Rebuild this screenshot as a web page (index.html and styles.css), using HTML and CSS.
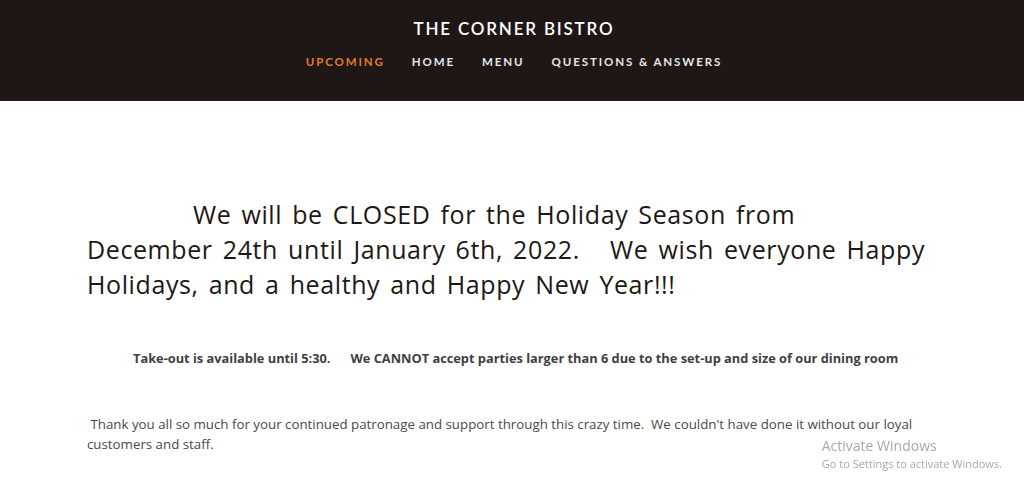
FILE: index.html
```html
<!DOCTYPE html>
<html>
<head>
<meta charset="utf-8">
<link rel="stylesheet" href="styles.css">
</head>
<body>
<header class="site-header">
  <div class="brand">THE CORNER BISTRO</div>
  <nav class="nav">
    <a class="nav-item active">UPCOMING</a>
    <a class="nav-item">HOME</a>
    <a class="nav-item">MENU</a>
    <a class="nav-item">QUESTIONS &amp; ANSWERS</a>
  </nav>
</header>
<main class="content">
  <h1 class="notice"><span class="indent">We will be CLOSED for the Holiday Season from</span><br>December 24th until January 6th, 2022.&nbsp;&nbsp; We wish everyone Happy Holidays, and a healthy and Happy New Year!!!</h1>
  <p class="takeout">Take-out is available until 5:30.&nbsp;&nbsp;&nbsp;&nbsp;&nbsp; We CANNOT accept parties larger than 6 due to the set-up and size of our dining room</p>
  <p class="thanks">&nbsp;Thank you all so much for your continued patronage and support through this crazy time.&nbsp; We couldn't have done it without our loyal customers and staff.</p>
</main>
<div class="watermark">
  <div class="wm-title">Activate Windows</div>
  <div class="wm-sub">Go to Settings to activate Windows.</div>
</div>
</body>
</html>
```
FILE: styles.css
```css
html, body { margin: 0; padding: 0; background: #fff; }
body { font-family: "Open Sans", Lato, sans-serif; color: #2a2320; }
.site-header {
  background: #1f1716;
  height: 101px;
  display: flex;
  flex-direction: column;
  align-items: center;
  padding-top: 18px;
  padding-left: 4px;
  box-sizing: border-box;
  font-family: Lato, sans-serif;
}
.brand {
  color: #fff;
  font-size: 17px;
  font-weight: 600;
  letter-spacing: 1.8px;
  line-height: 22px;
}
.nav {
  display: flex;
  gap: 27px;
  margin-top: 14px;
}
.nav-item {
  color: #e6e6e6;
  font-size: 11.5px;
  font-weight: 700;
  letter-spacing: 1.9px;
  line-height: 16px;
}
.nav-item.active { color: #e8772e; }
.content { padding: 96px 86px 0 87px; }
.notice {
  margin: 0;
  font-size: 25px;
  font-weight: 500;
  letter-spacing: 0.6px;
  word-spacing: 3px;
  line-height: 35px;
  color: #1e1714;
}
.indent { padding-left: 106px; }
.takeout {
  margin: 46px 0 0 46px;
  font-size: 12.8px;
  font-weight: 700;
  color: #3f3f3f;
  line-height: 20px;
}
.thanks {
  margin: 46px 0 0 0;
  font-size: 13.3px;
  color: #4a4a4a;
  line-height: 20px;
  max-width: 840px;
}
.watermark {
  position: fixed;
  right: 22px;
  bottom: 13px;
  font-family: "Open Sans", sans-serif;
  color: #a8a8a8;
}
.wm-title { font-size: 14px; line-height: 20px; }
.wm-sub { font-size: 11px; line-height: 16px; }
```
